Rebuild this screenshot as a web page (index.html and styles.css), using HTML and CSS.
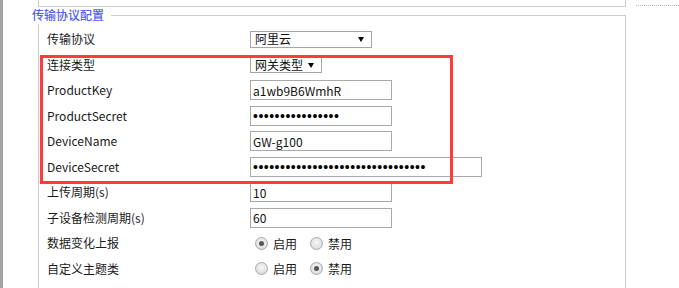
FILE: index.html
```html
<!DOCTYPE html>
<html lang="zh-CN">
<head>
<meta charset="utf-8">
<title>传输协议配置</title>
<link rel="stylesheet" href="styles.css">
</head>
<body>
<div class="page">
  <div class="edge"></div>
  <div class="main">
    <div class="topbox"></div>
    <section class="panel">
      <h3 class="legend">传输协议配置</h3>
      <div class="row">
        <label class="lbl">传输协议</label>
        <span class="select sel-wide"><select><option>阿里云</option></select></span>
      </div>
      <div class="row">
        <label class="lbl">连接类型</label>
        <span class="select sel-narrow"><select><option>网关类型</option></select></span>
      </div>
      <div class="row">
        <label class="lbl">ProductKey</label>
        <input class="field" type="text" value="a1wb9B6WmhR">
      </div>
      <div class="row">
        <label class="lbl">ProductSecret</label>
        <input class="field pwd" type="password" value="abcdefghijklmnop">
      </div>
      <div class="row">
        <label class="lbl">DeviceName</label>
        <input class="field" type="text" value="GW-g100">
      </div>
      <div class="row">
        <label class="lbl">DeviceSecret</label>
        <input class="field field-long pwd" type="password" value="abcdefghijklmnopqrstuvwxyzabcdef">
      </div>
      <div class="row">
        <label class="lbl">上传周期(s)</label>
        <input class="field" type="text" value="10">
      </div>
      <div class="row">
        <label class="lbl">子设备检测周期(s)</label>
        <input class="field" type="text" value="60">
      </div>
      <div class="row">
        <label class="lbl">数据变化上报</label>
        <div class="radios">
          <label class="opt"><input type="radio" name="chg" checked><span>启用</span></label>
          <label class="opt"><input type="radio" name="chg"><span>禁用</span></label>
        </div>
      </div>
      <div class="row">
        <label class="lbl">自定义主题类</label>
        <div class="radios">
          <label class="opt"><input type="radio" name="topic"><span>启用</span></label>
          <label class="opt"><input type="radio" name="topic" checked><span>禁用</span></label>
        </div>
      </div>
      <div class="mark"></div>
    </section>
  </div>
  <div class="aside"></div>
</div>
</body>
</html>
```

FILE: styles.css
```css
* { box-sizing: border-box; }

html, body {
  margin: 0;
  padding: 0;
  background: #fff;
}

body {
  font-family: "Noto Sans CJK SC", "Liberation Sans", sans-serif;
  font-size: 12px;
  color: #1a1a1a;
  overflow: hidden;
}

.page {
  display: flex;
  min-height: 288px;
}

.edge {
  width: 3px;
  background: #a3a3a3;
  flex: none;
}

.main {
  margin-left: 35px;
  width: 588px;
  flex: none;
  display: flex;
  flex-direction: column;
}

.topbox {
  height: 7px;
  border: 1px solid #cccccc;
  border-top: none;
}

.panel {
  position: relative;
  margin-top: 8px;
  flex: 1;
  border: 1px solid #cccccc;
  border-bottom: none;
  padding: 10.5px 0 0 8px;
}

.legend {
  position: absolute;
  left: -7px;
  top: -8px;
  margin: 0;
  padding: 0 7px 2px 0;
  background: #fff;
  color: #5560f0;
  font-size: 12px;
  font-weight: 500;
  line-height: 14px;
}

.row {
  display: grid;
  grid-template-columns: 203px auto;
  align-items: center;
  justify-items: start;
  height: 25.5px;
}

.lbl {
  line-height: 14px;
}

.select {
  position: relative;
  display: inline-block;
}

.select select {
  appearance: none;
  -webkit-appearance: none;
  display: block;
  border: 1px solid #a6a6a6;
  border-radius: 0;
  background: #fff;
  color: #111;
  font: inherit;
  font-size: 12px;
  line-height: 14px;
  padding: 0 0 0 4px;
  margin: 0;
}

.select::after {
  content: "";
  position: absolute;
  right: 8px;
  top: 50%;
  margin-top: -2px;
  border-left: 3px solid transparent;
  border-right: 3px solid transparent;
  border-top: 5px solid #000;
}

.sel-wide select {
  width: 122px;
  height: 17px;
}

.sel-narrow select {
  width: 72px;
  height: 16px;
}

.field {
  width: 142px;
  height: 20px;
  margin: 0;
  padding: 0 2px;
  border: 1px solid #a9a9a9;
  border-radius: 0;
  font: inherit;
  font-size: 12px;
  color: #111;
  background: #fff;
  outline: none;
}

.field-long {
  width: 232px;
}

.pwd {
  font-family: "Liberation Sans", sans-serif;
  font-size: 14px;
  letter-spacing: 0.5px;
  color: #000;
}

.radios {
  display: flex;
  align-items: center;
  gap: 13px;
  padding-left: 5px;
}

.opt {
  display: flex;
  align-items: center;
  gap: 5px;
}

.opt input {
  appearance: none;
  -webkit-appearance: none;
  width: 13px;
  height: 13px;
  margin: 0;
  border: 1px solid #a8a8a8;
  border-radius: 50%;
  background: radial-gradient(circle at 50% 40%, #f6f6f6 0%, #e2e2e2 60%, #d2d2d2 100%);
  position: relative;
}

.opt input:checked::after {
  content: "";
  position: absolute;
  left: 3px;
  top: 3px;
  width: 5px;
  height: 5px;
  border-radius: 50%;
  background: #555;
}

.mark {
  position: absolute;
  left: 1px;
  top: 39px;
  width: 413px;
  height: 129px;
  border: 3px solid #ff3b3b;
  pointer-events: none;
}

.aside {
  flex: 1;
  margin-left: 10px;
  margin-top: 5px;
  height: 1px;
  border-top: 1px dotted #bdbdbd;
}
```
